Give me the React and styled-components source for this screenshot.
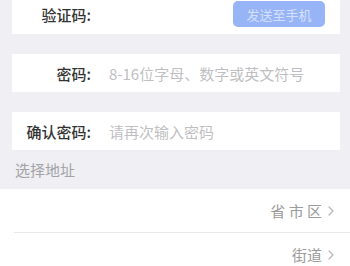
import React from 'react'
import styled, { createGlobalStyle } from 'styled-components'

const GlobalStyle = createGlobalStyle`
  html, body {
    margin: 0;
    padding: 0;
    background: #efeff4;
    font-family: "Noto Sans CJK SC", "Noto Sans", sans-serif;
    overflow: hidden;
  }
`

const Page = styled.div`
  width: 350px;
  margin-top: -6px;
  display: flex;
  flex-direction: column;
`

const FormCard = styled.div`
  display: flex;
  align-items: center;
  height: ${(p) => p.$height || 38}px;
  margin: 0 10px ${(p) => (p.$last ? 0 : 20)}px 12px;
  background: #ffffff;
`

const Label = styled.label`
  width: 79px;
  flex-shrink: 0;
  text-align: right;
  font-size: 15px;
  font-weight: 500;
  color: #333333;
`

const Input = styled.input`
  flex: 1;
  min-width: 0;
  margin-left: 18px;
  padding: 0;
  border: none;
  outline: none;
  background: transparent;
  font-family: inherit;
  font-size: 15px;
  color: #333333;

  &::placeholder {
    color: #bfbfc3;
  }
`

const SendButton = styled.button`
  width: 92px;
  height: 26px;
  flex-shrink: 0;
  margin-right: 15px;
  padding: 0;
  border: none;
  border-radius: 5px;
  background: #97b5f6;
  color: rgba(255, 255, 255, 0.6);
  font-family: inherit;
  font-size: 13px;
`

const SectionTitle = styled.div`
  height: 39px;
  display: flex;
  align-items: center;
  padding-left: 15px;
  font-size: 15px;
  color: #a3a3a6;
`

const List = styled.div`
  background: #ffffff;
`

const Row = styled.div`
  height: 43px;
  margin-left: 14px;
  padding-right: 16px;
  display: flex;
  align-items: center;
  justify-content: flex-end;
  gap: 6px;
  font-size: 15px;
  color: #9b9b9b;
  border-bottom: ${(p) => (p.$divider ? '1px solid #e8e8ea' : 'none')};
`

const Chevron = () => (
  <svg width="6" height="10" viewBox="0 0 6 10">
    <polyline points="1,1 5,5 1,9" fill="none" stroke="#b8b8bc" strokeWidth="1.3" strokeLinecap="round" strokeLinejoin="round" />
  </svg>
)

const App = () => {
  return (
    <>
      <GlobalStyle />
      <Page>
        <FormCard $height={40}>
          <Label>验证码:</Label>
          <Input type="text" />
          <SendButton>发送至手机</SendButton>
        </FormCard>
        <FormCard>
          <Label>密码:</Label>
          <Input type="password" placeholder="8-16位字母、数字或英文符号" />
        </FormCard>
        <FormCard $last>
          <Label>确认密码:</Label>
          <Input type="password" placeholder="请再次输入密码" />
        </FormCard>

        <SectionTitle>选择地址</SectionTitle>

        <List>
          <Row $divider>
            <span>省 市 区</span>
            <Chevron />
          </Row>
          <Row>
            <span>街道</span>
            <Chevron />
          </Row>
        </List>
      </Page>
    </>
  )
}

export default App
